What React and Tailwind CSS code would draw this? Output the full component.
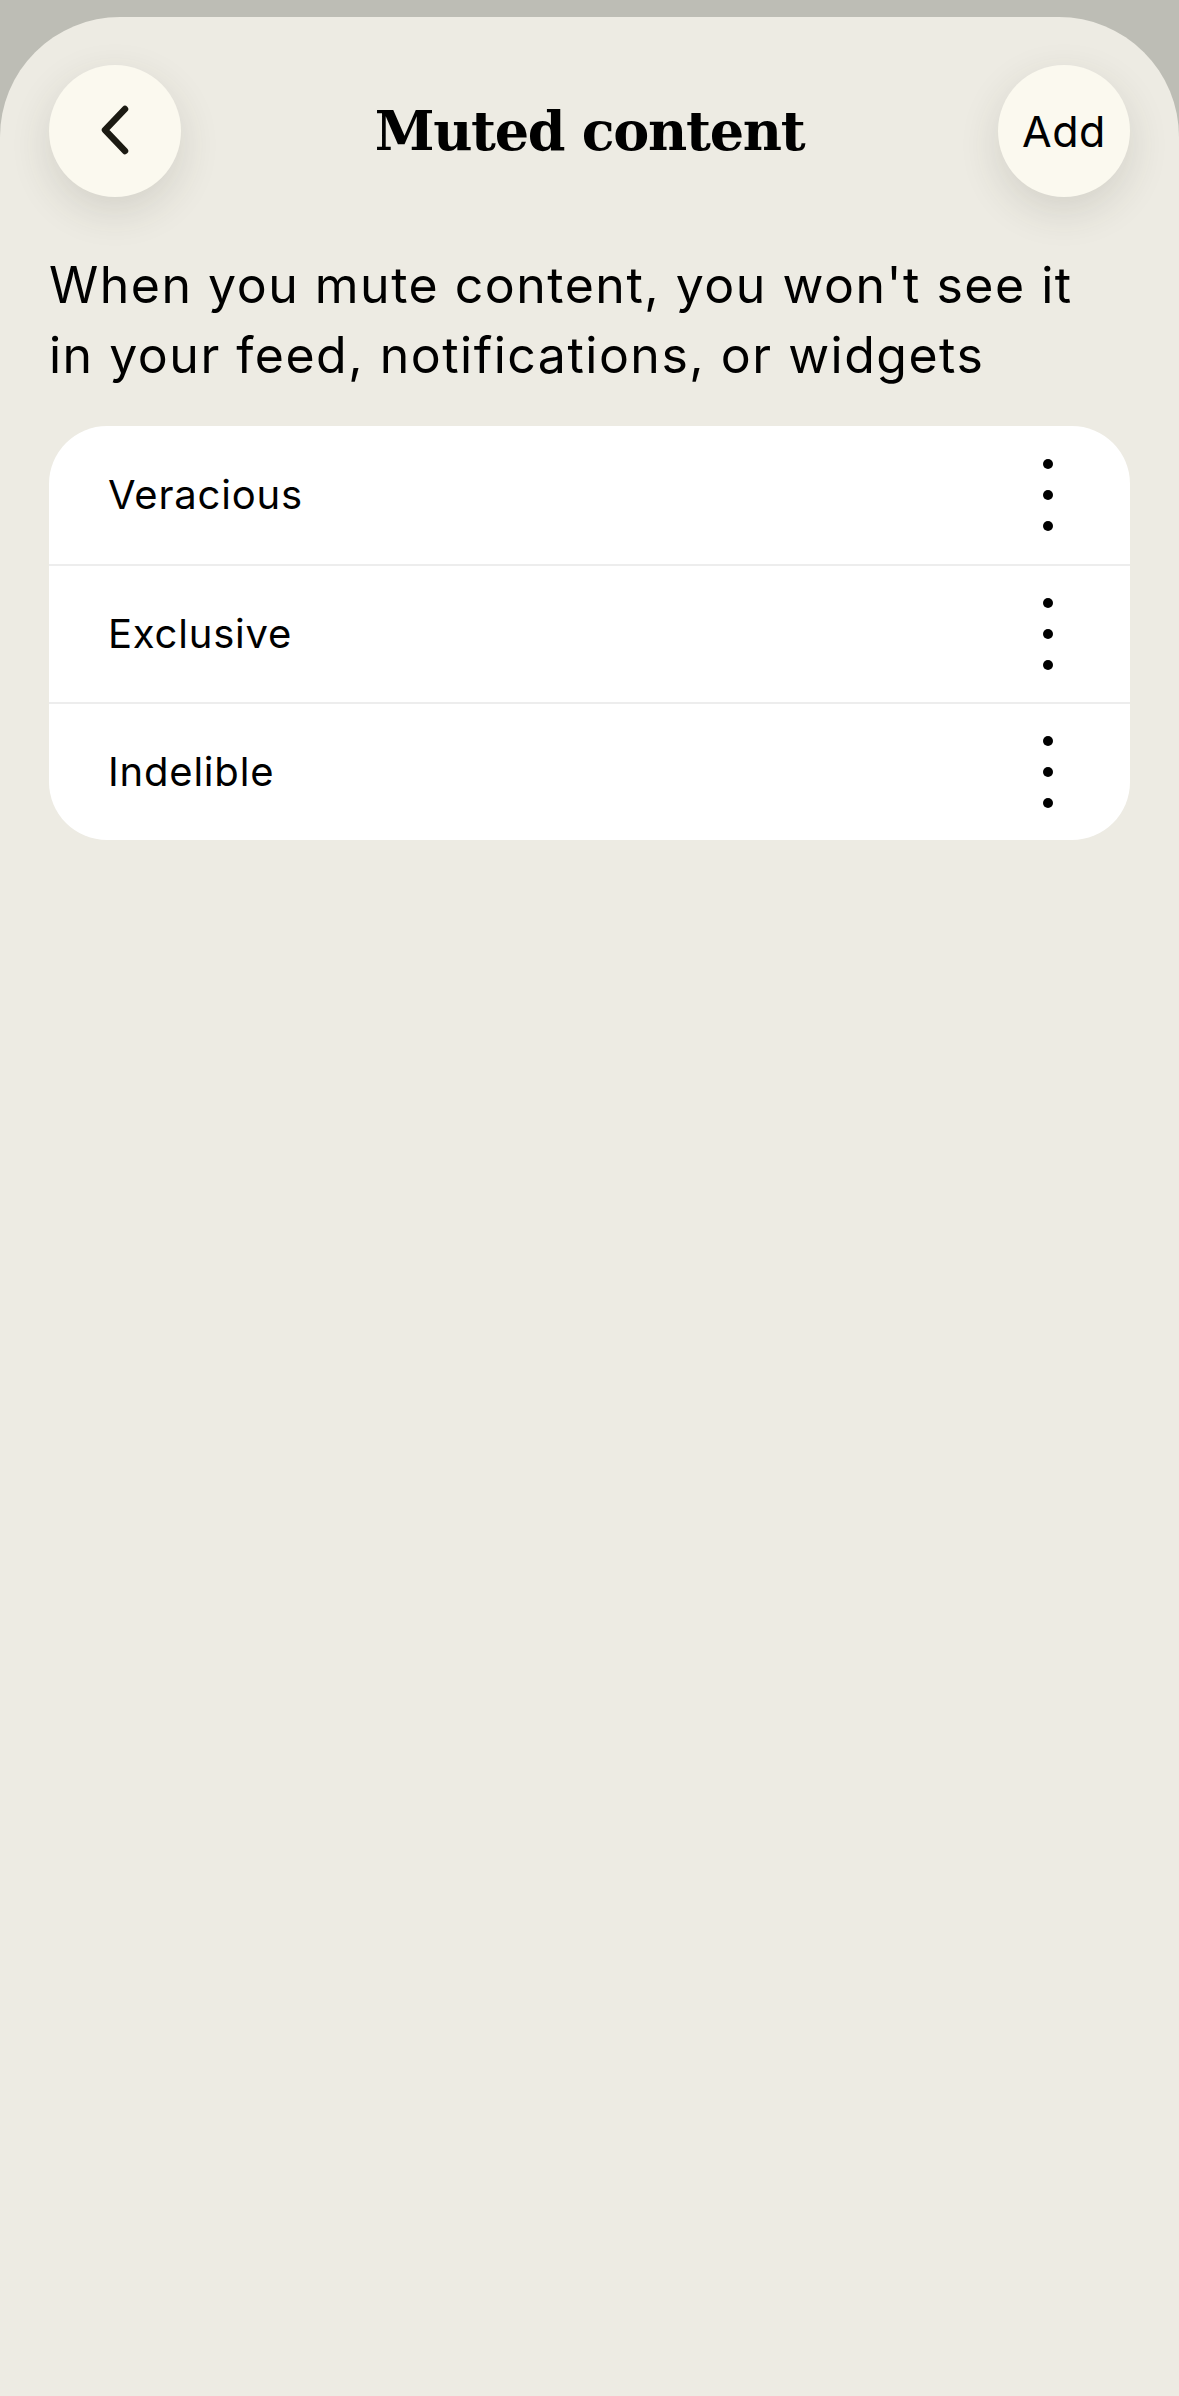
import React from "react";

const sans = { fontFamily: '"Inter", "Liberation Sans", sans-serif' };

const items = ["Veracious", "Exclusive", "Indelible"];

function RoundButton({ children }) {
  return (
    <button className="flex h-[132px] w-[132px] items-center justify-center rounded-full bg-[#fbf9ef] shadow-[0_14px_40px_rgba(60,55,40,0.14)]">
      {children}
    </button>
  );
}

function MoreDots() {
  return (
    <div className="flex flex-col items-center gap-[21px]">
      <span className="block h-[10px] w-[10px] rounded-full bg-black" />
      <span className="block h-[10px] w-[10px] rounded-full bg-black" />
      <span className="block h-[10px] w-[10px] rounded-full bg-black" />
    </div>
  );
}

export default function App() {
  return (
    <div className="min-h-[2396px] bg-[#bdbdb5] pt-[17px]">
      <div className="min-h-[2379px] rounded-t-[120px] bg-[#edebe3] px-[49px] pt-[48px]">
        {/* header */}
        <div className="flex items-center justify-between">
          <RoundButton>
            <svg width="40" height="60" viewBox="0 0 40 60" fill="none">
              <path
                d="M30 8 L10 29 L30 50"
                stroke="#1b1a12"
                strokeWidth="6.5"
                strokeLinecap="round"
                strokeLinejoin="round"
              />
            </svg>
          </RoundButton>
          <h1
            className="text-[54px] font-bold leading-none tracking-[-1.3px] text-black"
            style={{ fontFamily: '"DejaVu Serif", "Liberation Serif", serif' }}
          >
            Muted content
          </h1>
          <RoundButton>
            <span className="text-[43px] tracking-[0.5px] text-black" style={sans}>
              Add
            </span>
          </RoundButton>
        </div>

        <p
          className="mt-[53px] max-w-[1045px] text-[50px] leading-[70px] tracking-[1.5px] text-black"
          style={sans}
        >
          When you mute content, you won't see it in your feed, notifications, or widgets
        </p>

        <div className="mt-[36px] overflow-hidden rounded-[58px] bg-white">
          {items.map((item, i) => (
            <div
              key={item}
              className={
                "flex h-[138px] items-center justify-between pl-[59px] pr-[77px] " +
                (i > 0 ? "border-t-2 border-[#ededed]" : "")
              }
            >
              <span className="text-[40px] tracking-[0.8px] text-black" style={sans}>
                {item}
              </span>
              <MoreDots />
            </div>
          ))}
        </div>
      </div>
    </div>
  );
}
